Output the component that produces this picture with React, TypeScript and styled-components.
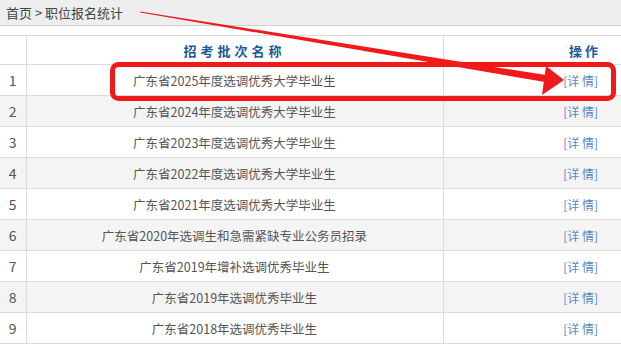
import styled, { createGlobalStyle } from "styled-components";

const GlobalStyle = createGlobalStyle`
	html,body{margin:0;padding:0;background:#fff;}
	body{font-family:"Noto Sans CJK SC","Liberation Sans",sans-serif;}
`;

const Page = styled.div`
	position:relative;width:621px;height:346px;overflow:hidden;
`;

const Crumb = styled.div`
	height:25px;line-height:25px;padding:0 6px;background:#eeeeee;border-bottom:1px solid #cfcfcf;
	color:#444;font-size:13px;
`;

const Table = styled.table`
	margin-top:9px;width:621px;border-collapse:collapse;table-layout:fixed;font-size:12.5px;color:#555;
`;

const HeadCell = styled.th<{ $align?: string }>`
	height:28px;padding:0 22px 0 0;border-top:1px solid #dcdcdc;border-bottom:1px solid #dcdcdc;
	color:#1c5b98;font-weight:bold;font-size:13px;letter-spacing:4px;
	text-align:${p => p.$align || "center"};
	&:first-child{padding:0;}
	&:nth-child(2){padding:0;border-left:1px solid #dcdcdc;border-right:1px solid #dcdcdc;}
	&:last-child{letter-spacing:3px;padding-right:20px;}
`;

const Row = styled.tr<{ $odd: boolean }>`
	background:${p => (p.$odd ? "#fff" : "#f4f4f4")};
`;

const Cell = styled.td`
	height:30px;padding:0;border-bottom:1px solid #dcdcdc;text-align:center;
	&:nth-child(2){border-left:1px solid #dcdcdc;border-right:1px solid #dcdcdc;}
`;

const NumCell = styled(Cell)`
	color:#555;font-size:14px;
`;

const OpCell = styled(Cell)`
	text-align:right;padding-right:23px;
`;

const Detail = styled.a`
	color:#5588c4;font-size:12px;text-decoration:none;letter-spacing:0;
`;

const Overlay = styled.svg`
	position:absolute;left:0;top:0;pointer-events:none;
`;

const rows = [
	"广东省2025年度选调优秀大学毕业生",
	"广东省2024年度选调优秀大学毕业生",
	"广东省2023年度选调优秀大学毕业生",
	"广东省2022年度选调优秀大学毕业生",
	"广东省2021年度选调优秀大学毕业生",
	"广东省2020年选调生和急需紧缺专业公务员招录",
	"广东省2019年增补选调优秀毕业生",
	"广东省2019年选调优秀毕业生",
	"广东省2018年选调优秀毕业生",
];

export default function App() {
	return (
		<>
			<GlobalStyle />
			<Page>
				<Crumb>首页 &gt; 职位报名统计</Crumb>
				<Table>
					<colgroup>
						<col style={{ width: 26 }} />
						<col style={{ width: 417 }} />
						<col />
					</colgroup>
					<thead>
						<tr>
							<HeadCell></HeadCell>
							<HeadCell>招考批次名称</HeadCell>
							<HeadCell $align="right">操作</HeadCell>
						</tr>
					</thead>
					<tbody>
						{rows.map((name, i) => (
							<Row key={i} $odd={i % 2 === 0}>
								<NumCell>{i + 1}</NumCell>
								<Cell>{name}</Cell>
								<OpCell><Detail href="#">[详 情]</Detail></OpCell>
							</Row>
						))}
					</tbody>
				</Table>
				<Overlay width="621" height="346" viewBox="0 0 621 346">
					<rect x="112.5" y="64.5" width="501" height="34" rx="6" fill="none" stroke="#f01a1a" strokeWidth="5" />
					<polygon points="140,11.5 140.2,12.5 548,82.5 549,75.5" fill="#f01a1a" />
					<polygon points="564,80 546,66 542,95" fill="#f01a1a" />
				</Overlay>
			</Page>
		</>
	);
}
